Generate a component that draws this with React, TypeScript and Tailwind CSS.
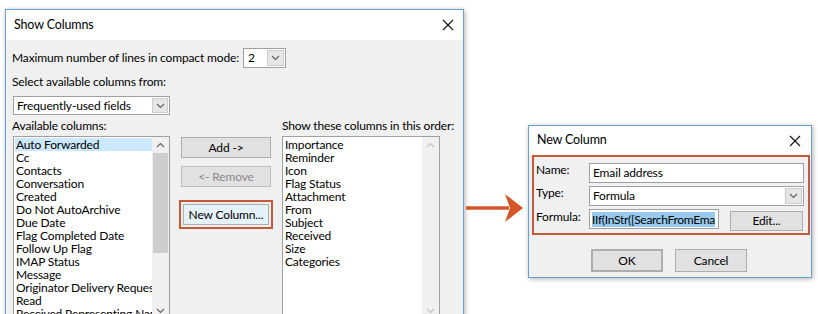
import type { ReactNode } from 'react';

const available = [
  'Auto Forwarded',
  'Cc',
  'Contacts',
  'Conversation',
  'Created',
  'Do Not AutoArchive',
  'Due Date',
  'Flag Completed Date',
  'Follow Up Flag',
  'IMAP Status',
  'Message',
  'Originator Delivery Requested',
  'Read',
  'Received Representing Name',
];

const shown = [
  'Importance',
  'Reminder',
  'Icon',
  'Flag Status',
  'Attachment',
  'From',
  'Subject',
  'Received',
  'Size',
  'Categories',
];

function CloseIcon() {
  return (
    <svg width="12" height="12" viewBox="0 0 12 12" className="shrink-0">
      <path d="M1 1L11 11M11 1L1 11" stroke="#111" strokeWidth="1.1" fill="none" />
    </svg>
  );
}

function Chevron({ up = false, color = '#606060' }: { up?: boolean; color?: string }) {
  return (
    <svg width="9" height="6" viewBox="0 0 9 6">
      <polyline
        points={up ? '1,5 4.5,1.5 8,5' : '1,1 4.5,4.5 8,1'}
        stroke={color}
        strokeWidth="1.1"
        fill="none"
      />
    </svg>
  );
}

function DropButton({ className = '' }: { className?: string }) {
  return (
    <div
      className={`flex items-center justify-center border border-[#cdcdcd] bg-[#e6e6e6] ${className}`}
    >
      <Chevron />
    </div>
  );
}

function Button({
  children,
  className = '',
}: {
  children: ReactNode;
  className?: string;
}) {
  return (
    <div
      className={`flex items-center justify-center border border-[#adadad] bg-[#e1e1e1] text-[12px] ${className}`}
    >
      {children}
    </div>
  );
}

function ListBox({
  items,
  selected,
  active,
  width,
}: {
  items: string[];
  selected?: number;
  active: boolean;
  width: string;
}) {
  return (
    <div className={`flex h-[184px] border border-[#a0a0a0] bg-white ${width}`}>
      <div className="min-w-0 flex-1 overflow-hidden pt-[1px]">
        {items.map((item, i) => (
          <div
            key={item}
            className={`ml-[1px] h-[13px] whitespace-nowrap pl-[1px] text-[12px] leading-[13px] ${
              i === selected ? 'bg-[#cce8ff]' : ''
            }`}
          >
            {item}
          </div>
        ))}
      </div>
      <div className="flex w-[17px] flex-col bg-[#f0f0f0]">
        <div className="flex h-[16px] items-center justify-center">
          <Chevron up color={active ? '#606060' : '#c0c0c0'} />
        </div>
        {active ? <div className="mx-[1px] h-[100px] bg-[#cdcdcd]" /> : null}
        <div className="flex-1" />
        <div className="flex h-[17px] items-center justify-center">
          <Chevron color={active ? '#606060' : '#c0c0c0'} />
        </div>
      </div>
    </div>
  );
}

function ShowColumns() {
  return (
    <div className="ml-[5px] mt-[9px] h-[330px] w-[459px] shrink-0 border border-[#6aa0d8] bg-[#f0f0f0] shadow-[1px_1px_5px_rgba(0,0,0,0.3)]">
      <div className="flex h-[30px] items-center justify-between bg-white pl-[8px] pr-[9px]">
        <span className="text-[12.5px]">Show Columns</span>
        <CloseIcon />
      </div>
      <div className="pl-[6px] pt-[8px] text-[12px]">
        <div className="flex h-[20px] items-center">
          <span>Maximum number of lines in compact mode:</span>
          <div className="ml-[4px] flex h-[20px] w-[43px] items-center border border-[#a0a0a0] bg-white">
            <span className="flex-1 pl-[4px]">2</span>
            <DropButton className="mr-[1px] h-[16px] w-[17px]" />
          </div>
        </div>
        <div className="mt-[7px] leading-[14px]">Select available columns from:</div>
        <div className="ml-[1px] mt-[7px] flex h-[19px] w-[157px] items-center border border-[#a0a0a0] bg-white">
          <span className="flex-1 pl-[3px]">Frequently-used fields</span>
          <DropButton className="mr-[1px] h-[15px] w-[16px]" />
        </div>
        <div className="mt-[4px] flex leading-[14px]">
          <span className="w-[270px]">Available columns:</span>
          <span>Show these columns in this order:</span>
        </div>
        <div className="mt-[3px] flex">
          <div className="ml-[1px]">
            <ListBox items={available} selected={0} active width="w-[157px]" />
          </div>
          <div className="ml-[11px] flex w-[90px] flex-col">
            <Button className="mt-[1px] h-[21px]">Add -&gt;</Button>
            <Button className="mt-[8px] h-[21px] border-[#bfbfbf] bg-[#cccccc] text-[#8a8a8a]">
              &lt;- Remove
            </Button>
            <div className="-ml-[2px] mt-[13px] h-[29px] w-[94px] border-2 border-[#c55a3b] p-[2px]">
              <Button className="h-[21px] border-[#3c8fd8] bg-[#e5f1fb]">New Column...</Button>
            </div>
          </div>
          <div className="ml-[11px]">
            <ListBox items={shown} active={false} width="w-[158px]" />
          </div>
        </div>
      </div>
    </div>
  );
}

function Arrow() {
  return (
    <svg width="60" height="28" viewBox="0 0 60 28" className="ml-[1px] mt-[194px] shrink-0">
      <line x1="1" y1="14" x2="44" y2="14" stroke="#d6562b" strokeWidth="3.5" />
      <polygon points="40,0 58,14 40,28 45,14" fill="#d6562b" />
    </svg>
  );
}

function NewColumn() {
  return (
    <div className="ml-[3px] mt-[125px] flex h-[153px] w-[284px] shrink-0 flex-col border border-[#6aa0d8] bg-[#f0f0f0] shadow-[1px_1px_5px_rgba(0,0,0,0.3)]">
      <div className="flex h-[29px] items-center justify-between bg-white pl-[8px] pr-[10px]">
        <span className="text-[12.5px]">New Column</span>
        <CloseIcon />
      </div>
      <div className="mx-[3px] h-[80px] w-[278px] border-2 border-[#c55a3b] text-[12px]">
        <div className="mt-[6px] flex h-[20px]">
          <span className="w-[55px] pl-[2px] leading-[14px]">Name:</span>
          <div className="flex h-[20px] w-[215px] items-center border border-[#a0a0a0] bg-white pl-[3px]">
            Email address
          </div>
        </div>
        <div className="mt-[3px] flex h-[20px]">
          <span className="w-[55px] pl-[2px] leading-[14px]">Type:</span>
          <div className="flex h-[20px] w-[215px] items-center border border-[#a0a0a0] bg-white pl-[3px]">
            <span className="flex-1">Formula</span>
            <DropButton className="mr-[1px] h-[16px] w-[17px]" />
          </div>
        </div>
        <div className="mt-[3px] flex h-[22px] items-start">
          <span className="w-[55px] pl-[2px] pt-[1px] leading-[14px]">Formula:</span>
          <div className="flex h-[20px] w-[130px] items-center overflow-hidden border border-[#a0a0a0] bg-white pl-[2px]">
            <span className="whitespace-nowrap bg-[#99c9ef] leading-[15px] tracking-[-0.3px]">
              IIf(InStr([SearchFromEma
            </span>
          </div>
          <Button className="ml-[11px] mt-[2px] h-[20px] w-[73px]">Edit...</Button>
        </div>
      </div>
      <div className="mt-[14px] flex pl-[62px]">
        <Button className="h-[23px] w-[72px] border-2 border-[#2f7fd0]">OK</Button>
        <Button className="ml-[12px] h-[23px] w-[72px]">Cancel</Button>
      </div>
    </div>
  );
}

export default function App() {
  return (
    <div className="flex h-[314px] w-[818px] overflow-hidden bg-white font-['Lato',sans-serif] tracking-[-0.15px] text-black">
      <ShowColumns />
      <Arrow />
      <NewColumn />
    </div>
  );
}
